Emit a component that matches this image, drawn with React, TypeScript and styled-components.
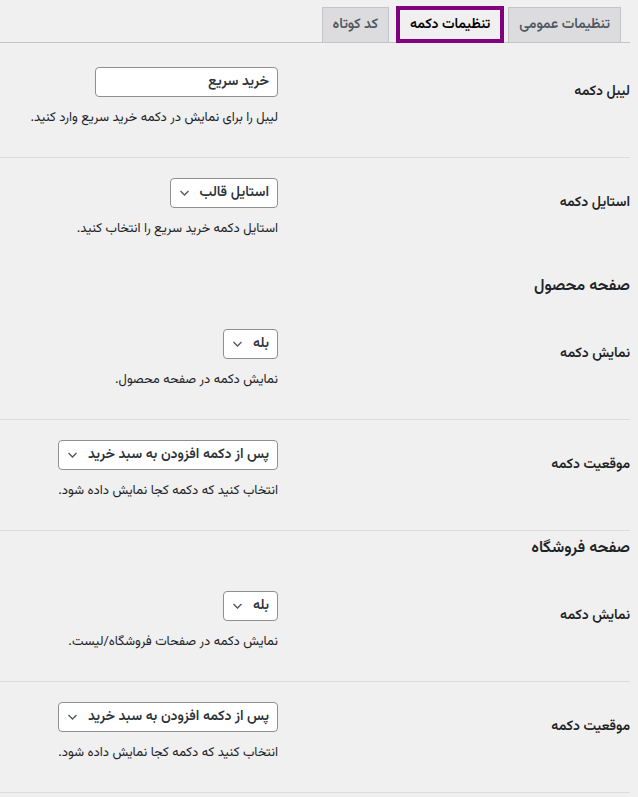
import React from "react"
import styled, { createGlobalStyle } from "styled-components"

const GlobalStyle = createGlobalStyle`
  html, body {
    margin: 0;
    padding: 0;
    background: #f0f0f1;
  }
  body {
    direction: rtl;
    font-family: "Vazirmatn", "DejaVu Sans", "Noto Sans", sans-serif;
    color: #1d2327;
    font-size: 13px;
  }
`

const Wrap = styled.div`
  padding-right: 8px;
`

const TabBar = styled.nav`
  display: flex;
  align-items: flex-end;
  gap: 4px;
  padding: 7px 9px 0 0;
  margin-bottom: 4px;
  border-bottom: 1px solid #c3c4c7;
  height: 35px;
`

const Tab = styled.a<{ $active?: boolean }>`
  display: block;
  font-size: 14px;
  font-weight: 600;
  line-height: 24px;
  text-decoration: none;
  cursor: pointer;
  white-space: nowrap;
  border: ${(p) => (p.$active ? "4px solid #800080" : "1px solid #c3c4c7")};
  border-bottom: ${(p) => (p.$active ? "4px solid #800080" : "none")};
  background: ${(p) => (p.$active ? "#f0f0f1" : "#dcdcde")};
  color: ${(p) => (p.$active ? "#000" : "#50575e")};
  padding: ${(p) => (p.$active ? "3px 10px 2px" : "5px 10px")};
  margin-bottom: ${(p) => (p.$active ? "-1px" : "0")};
  margin-left: ${(p) => (p.$active ? "3px" : "0")};
`

const Row = styled.div<{ $divider?: boolean }>`
  display: flex;
  align-items: center;
  border-bottom: 1px solid ${(p) => (p.$divider ? "#dcdcde" : "transparent")};
`

const Label = styled.div`
  flex: 0 0 352px;
  font-size: 14px;
  font-weight: 600;
  line-height: 20px;
  padding-bottom: 20px;
`

const Field = styled.div`
  flex: 1;
  display: flex;
  flex-direction: column;
  align-items: flex-start;
  padding: 20px 0 29px;
`

const TextInput = styled.input`
  box-sizing: border-box;
  width: 183px;
  height: 30px;
  border: 1px solid #8c8f94;
  border-radius: 4px;
  background: #fff;
  padding: 0 8px;
  font-family: inherit;
  font-size: 14px;
  font-weight: 600;
  color: #2c3338;
  direction: rtl;
  outline: none;
`

const SelectBox = styled.div`
  box-sizing: border-box;
  display: inline-flex;
  align-items: center;
  gap: 10px;
  height: 30px;
  padding: 0 8px;
  border: 1px solid #8c8f94;
  border-radius: 4px;
  background: #fff;
  font-size: 14px;
  font-weight: 600;
  color: #2c3338;
  white-space: nowrap;
  cursor: pointer;
`

const Description = styled.p`
  margin: 11px 0 0;
  font-size: 13px;
  line-height: 20px;
  color: #1d2327;
`

const SectionTitle = styled.h2`
  margin: 6px 0 10px;
  font-size: 16px;
  font-weight: 600;
  line-height: 24px;
  color: #1d2327;
`

const Chevron = () => (
  <svg width="11" height="8" viewBox="0 0 11 8" fill="none">
    <path d="M1.5 2 L5.5 6 L9.5 2" stroke="#50575e" strokeWidth="1.3" />
  </svg>
)

const Select = ({ value }: { value: string }) => (
  <SelectBox>
    <span>{value}</span>
    <Chevron />
  </SelectBox>
)

const after = "پس از دکمه افزودن به سبد خرید"

export default function App() {
  return (
    <Wrap>
      <GlobalStyle />
      <TabBar>
        <Tab>تنظیمات عمومی</Tab>
        <Tab $active>تنظیمات دکمه</Tab>
        <Tab>کد کوتاه</Tab>
      </TabBar>

      <Row $divider>
        <Label>لیبل دکمه</Label>
        <Field>
          <TextInput defaultValue="خرید سریع" />
          <Description>لیبل را برای نمایش در دکمه خرید سریع وارد کنید.</Description>
        </Field>
      </Row>
      <Row>
        <Label>استایل دکمه</Label>
        <Field>
          <Select value="استایل قالب" />
          <Description>استایل دکمه خرید سریع را انتخاب کنید.</Description>
        </Field>
      </Row>

      <SectionTitle>صفحه محصول</SectionTitle>
      <Row $divider>
        <Label>نمایش دکمه</Label>
        <Field>
          <Select value="بله" />
          <Description>نمایش دکمه در صفحه محصول.</Description>
        </Field>
      </Row>
      <Row $divider>
        <Label>موقعیت دکمه</Label>
        <Field>
          <Select value={after} />
          <Description>انتخاب کنید که دکمه کجا نمایش داده شود.</Description>
        </Field>
      </Row>

      <SectionTitle>صفحه فروشگاه</SectionTitle>
      <Row $divider>
        <Label>نمایش دکمه</Label>
        <Field>
          <Select value="بله" />
          <Description>نمایش دکمه در صفحات فروشگاه/لیست.</Description>
        </Field>
      </Row>
      <Row $divider>
        <Label>موقعیت دکمه</Label>
        <Field>
          <Select value={after} />
          <Description>انتخاب کنید که دکمه کجا نمایش داده شود.</Description>
        </Field>
      </Row>
    </Wrap>
  )
}
